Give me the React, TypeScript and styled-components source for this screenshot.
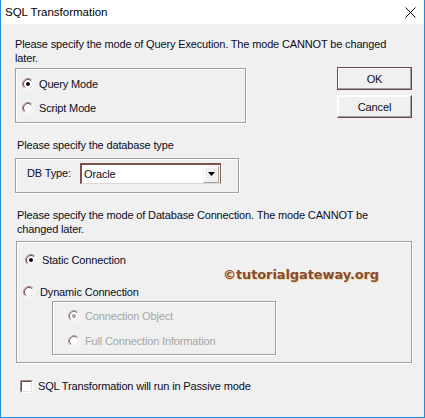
import React from "react";
import styled, { createGlobalStyle } from "styled-components";

const Global = createGlobalStyle`
  html, body { margin: 0; padding: 0; background: #f0f0f0; }
  * { box-sizing: border-box; }
`;

const Window = styled.div`
  position: relative;
  width: 425px;
  height: 418px;
  display: flex;
  flex-direction: column;
  border: 1px solid #1c8ce4;
  border-top: none;
  font-family: "Liberation Sans", Arial, sans-serif;
  font-size: 11px;
  letter-spacing: -0.15px;
  color: #0c0c1e;
  overflow: hidden;
`;

const TitleBar = styled.div`
  height: 24px;
  flex: none;
  background: #ffffff;
  display: flex;
  align-items: center;
  justify-content: space-between;
  padding: 0 8px 0 4px;
  font-size: 11.5px;
  letter-spacing: 0;
  color: #000;
`;

const Body = styled.div`
  flex: 1;
  background: #f0f0f0;
  padding: 13px 12px 0 14px;
  display: flex;
  flex-direction: column;
`;

const Para = styled.div<{ $ml?: number; $mt?: number }>`
  line-height: 14px;
  margin-left: ${(p) => p.$ml ?? 0}px;
  margin-top: ${(p) => p.$mt ?? 0}px;
  white-space: nowrap;
`;

const TopRow = styled.div`
  display: flex;
  align-items: flex-start;
`;

const LeftCol = styled.div`
  width: 231px;
  display: flex;
  flex-direction: column;
`;

const ButtonCol = styled.div`
  margin-left: auto;
  margin-top: 2px;
  display: flex;
  flex-direction: column;
  gap: 5px;
`;

const Button = styled.button<{ $default?: boolean }>`
  width: 75px;
  height: 23px;
  font-family: inherit;
  font-size: 11px;
  letter-spacing: inherit;
  color: #0c0c1e;
  background: #f0f0f0;
  padding: 0;
  border: 1px solid ${(p) => (p.$default ? "#6e4844" : "#ffffff")};
  border-right-color: #6e4844;
  border-bottom-color: #6e4844;
  box-shadow: inset -1px -1px #a0a0a0, inset 1px 1px #ffffff;
`;

const Group = styled.div<{ $w?: number; $ml?: number; $mt?: number; $pad: string }>`
  width: ${(p) => (p.$w ? `${p.$w}px` : "auto")};
  margin-left: ${(p) => p.$ml ?? 0}px;
  margin-top: ${(p) => p.$mt ?? 0}px;
  border: 1px solid #a0a0a0;
  box-shadow: inset 1px 1px #ffffff, 1px 1px #ffffff;
  padding: ${(p) => p.$pad};
  display: flex;
  flex-direction: column;
`;

const OptionRow = styled.div<{ $h: number; $indent?: number; $disabled?: boolean; $mt?: number }>`
  height: ${(p) => p.$h}px;
  display: flex;
  align-items: center;
  gap: 5px;
  padding-left: ${(p) => p.$indent ?? 0}px;
  margin-top: ${(p) => p.$mt ?? 0}px;
  color: ${(p) => (p.$disabled ? "#a6a6a6" : "inherit")};
  white-space: nowrap;
`;

const DbRow = styled.div`
  display: flex;
  align-items: center;
  padding-left: 11px;
`;

const DbLabel = styled.span`
  width: 53px;
  line-height: 21px;
`;

const SelectBox = styled.div`
  width: 141px;
  height: 21px;
  display: flex;
  align-items: center;
  background: #ffffff;
  border-top: 2px solid #7e524c;
  border-left: 2px solid #7e524c;
  border-right: 1px solid #8a5a55;
  border-bottom: 1px solid #d8d8d8;
  padding-left: 2px;
`;

const SelectValue = styled.span`
  flex: 1;
`;

const ArrowButton = styled.div`
  width: 16px;
  height: 17px;
  margin-right: 1px;
  background: #f0f0f0;
  border-top: 1px solid #f0f0f0;
  border-left: 1px solid #f0f0f0;
  border-right: 1px solid #a0a0a0;
  border-bottom: 1px solid #a0a0a0;
  box-shadow: inset 1px 1px #ffffff;
  display: flex;
  align-items: center;
  justify-content: center;
`;

const Watermark = styled.div`
  position: absolute;
  left: 222px;
  top: 267px;
  font-family: "DejaVu Sans", Verdana, sans-serif;
  font-weight: bold;
  font-size: 13px;
  color: #8b4a30;
  text-shadow: 1px 1px 0 #e8d8a0;
  letter-spacing: -0.1px;
  white-space: nowrap;
`;

const Radio = ({ checked, disabled }: { checked?: boolean; disabled?: boolean }) => {
  const dark = disabled ? "#8a6a66" : "#6e4844";
  const mid = disabled ? "#b0a0a0" : "#a08a86";
  return (
    <svg width="12" height="12" viewBox="0 0 12 12" style={{ flex: "none" }}>
      <circle cx="6" cy="6" r="5.5" fill="#ffffff" stroke="#ffffff" />
      <path d="M2.1 9.9 A5.5 5.5 0 0 1 9.9 2.1" fill="none" stroke={mid} strokeWidth="1" />
      <path d="M2.8 9.2 A4.5 4.5 0 0 1 9.2 2.8" fill="none" stroke={dark} strokeWidth="1" />
      <path d="M9.2 2.8 A4.5 4.5 0 0 1 2.8 9.2" fill="none" stroke="#e3e3e3" strokeWidth="1" />
      {checked && <circle cx="6" cy="6" r="2" fill={disabled ? "#a0a0a0" : "#0c0c1e"} />}
    </svg>
  );
};

const Checkbox = () => (
  <svg width="13" height="13" viewBox="0 0 13 13" style={{ flex: "none" }}>
    <rect x="0" y="0" width="13" height="13" fill="#ffffff" />
    <path d="M0.5 12.5 V0.5 H12.5" fill="none" stroke="#a08a86" />
    <path d="M1.5 11.5 V1.5 H11.5" fill="none" stroke="#6e4844" />
    <path d="M1.5 11.5 H11.5 V1.5" fill="none" stroke="#e3e3e3" />
  </svg>
);

const CloseIcon = () => (
  <svg width="11" height="11" viewBox="0 0 11 11">
    <path d="M0.5 0.5 L10.5 10.5 M10.5 0.5 L0.5 10.5" stroke="#000" strokeWidth="1" />
  </svg>
);

export default function App() {
  return (
    <>
      <Global />
      <Window>
        <TitleBar>
          <span>SQL Transformation</span>
          <CloseIcon />
        </TitleBar>
        <Body>
          <Para>
            Please specify the mode of Query Execution. The mode CANNOT be changed
            <br />
            later.
          </Para>
          <TopRow>
            <LeftCol>
              <Group $mt={3} $pad="3px 0 2px 6px">
                <OptionRow $h={24}>
                  <Radio checked />
                  <span>Query Mode</span>
                </OptionRow>
                <OptionRow $h={24}>
                  <Radio />
                  <span>Script Mode</span>
                </OptionRow>
              </Group>
              <Para $ml={2} $mt={15}>Please specify the database type</Para>
              <Group $w={224} $mt={6} $pad="4px 0 8px 0">
                <DbRow>
                  <DbLabel>DB Type:</DbLabel>
                  <SelectBox>
                    <SelectValue>Oracle</SelectValue>
                    <ArrowButton>
                      <svg width="7" height="4" viewBox="0 0 7 4">
                        <path d="M0 0 H7 L3.5 4 Z" fill="#000" />
                      </svg>
                    </ArrowButton>
                  </SelectBox>
                </DbRow>
              </Group>
            </LeftCol>
            <ButtonCol>
              <Button $default>OK</Button>
              <Button>Cancel</Button>
            </ButtonCol>
          </TopRow>
          <Para $ml={2} $mt={15}>
            Please specify the mode of Database Connection. The mode CANNOT be
            <br />
            changed later.
          </Para>
          <Group $ml={1} $mt={5} $pad="6px 0 7px 0">
            <OptionRow $h={24} $indent={8}>
              <Radio checked />
              <span>Static Connection</span>
            </OptionRow>
            <OptionRow $h={19} $indent={6} $mt={10}>
              <Radio />
              <span>Dynamic Connection</span>
            </OptionRow>
            <Group $w={224} $ml={35} $pad="2px 0 1px 15px">
              <OptionRow $h={24} $disabled>
                <Radio checked disabled />
                <span>Connection Object</span>
              </OptionRow>
              <OptionRow $h={24} $mt={1} $disabled>
                <Radio disabled />
                <span>Full Connection Information</span>
              </OptionRow>
            </Group>
          </Group>
          <OptionRow $h={20} $indent={5} $mt={13}>
            <Checkbox />
            <span>SQL Transformation will run in Passive mode</span>
          </OptionRow>
        </Body>
        <Watermark>©tutorialgateway.org</Watermark>
      </Window>
    </>
  );
}
